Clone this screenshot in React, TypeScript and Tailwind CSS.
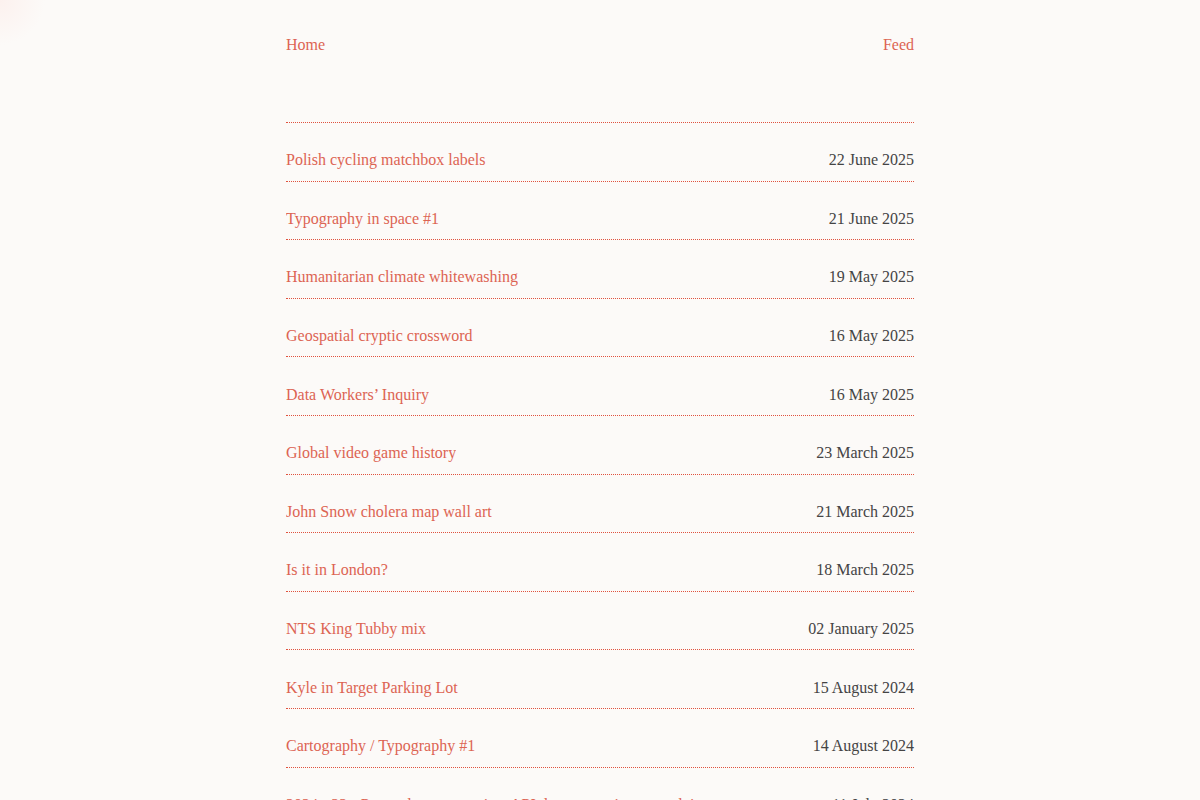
import React from "react";

type Post = { title: string; date: string };

const posts: Post[] = [
  { title: "Polish cycling matchbox labels", date: "22 June 2025" },
  { title: "Typography in space #1", date: "21 June 2025" },
  { title: "Humanitarian climate whitewashing", date: "19 May 2025" },
  { title: "Geospatial cryptic crossword", date: "16 May 2025" },
  { title: "Data Workers\u2019 Inquiry", date: "16 May 2025" },
  { title: "Global video game history", date: "23 March 2025" },
  { title: "John Snow cholera map wall art", date: "21 March 2025" },
  { title: "Is it in London?", date: "18 March 2025" },
  { title: "NTS King Tubby mix", date: "02 January 2025" },
  { title: "Kyle in Target Parking Lot", date: "15 August 2024" },
  { title: "Cartography / Typography #1", date: "14 August 2024" },
  { title: "2024 - 22 - Postcodes as a service: API documentation to explain to experts", date: "11 July 2024" },
];

export default function App() {
  return (
    <div
      className="h-[800px] overflow-hidden bg-[#fcfaf8] bg-[radial-gradient(circle_at_0_0,#fcf1ee_0,#fcfaf8_45px)] text-[16px] leading-[24px]"
      style={{ fontFamily: '"Liberation Serif", "Times New Roman", serif' }}
    >
      <div className="mx-auto w-[628px]">
        <header className="flex justify-between pt-[33px]">
          <a href="#" className="text-[#dc6453]">Home</a>
          <a href="#" className="text-[#dc6453]">Feed</a>
        </header>
        <ul className="mt-[65px] border-t border-dotted border-[#e0523e]">
          {posts.map((p) => (
            <li
              key={p.title}
              className="flex h-[58.6px] items-center justify-between gap-6 border-b border-dotted border-[#e0523e] pt-[25px] pb-[8px]"
            >
              <a href="#" className="truncate text-[#dc6453]">{p.title}</a>
              <span className="shrink-0 text-[#444444]">{p.date}</span>
            </li>
          ))}
        </ul>
      </div>
    </div>
  );
}
